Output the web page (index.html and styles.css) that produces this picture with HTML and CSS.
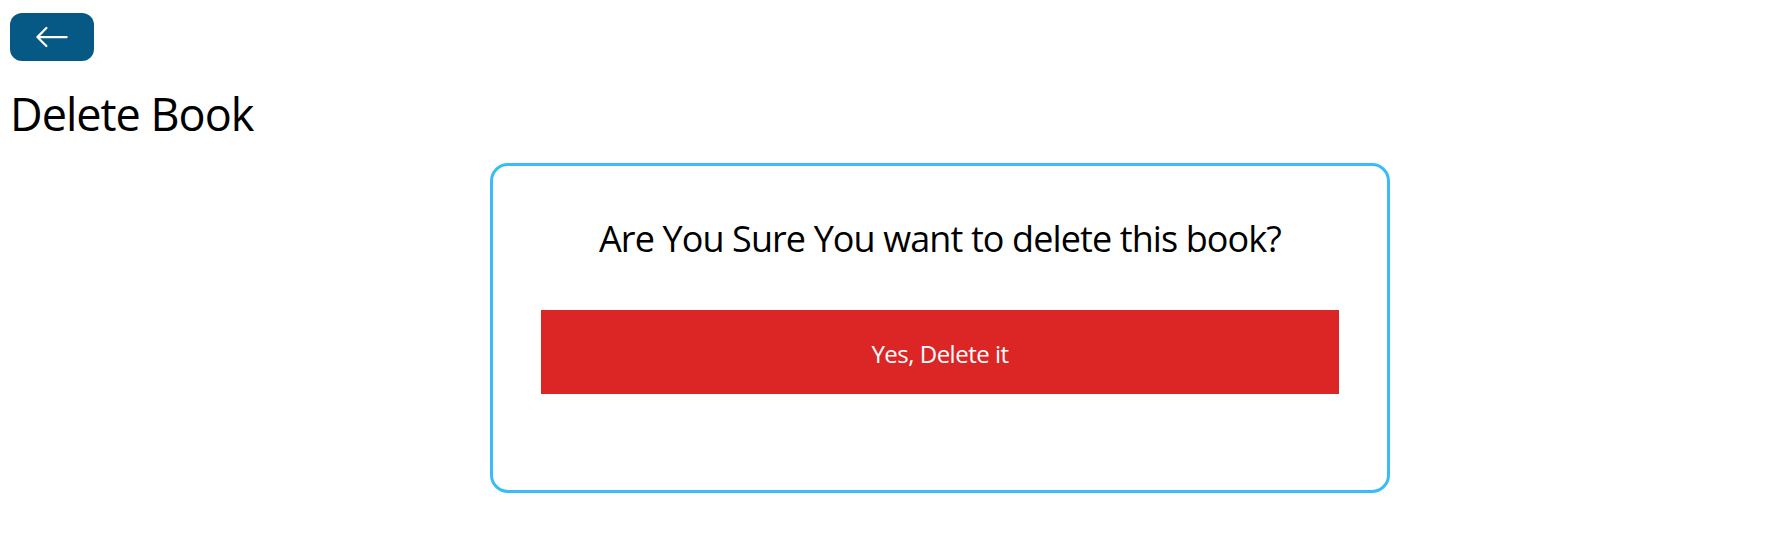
FILE: index.html
```html
<!DOCTYPE html>
<html lang="en">
<head>
<meta charset="utf-8">
<title>Delete Book</title>
<link rel="stylesheet" href="styles.css">
</head>
<body>
<div class="page">
  <a class="back-btn" href="#" aria-label="Back">
    <svg class="back-icon" viewBox="0 0 16 16" width="36" height="36" fill="currentColor"><path fill-rule="evenodd" d="M15 8a.5.5 0 0 0-.5-.5H2.707l3.147-3.146a.5.5 0 1 0-.708-.708l-4 4a.5.5 0 0 0 0 .708l4 4a.5.5 0 0 0 .708-.708L2.707 8.5H14.5A.5.5 0 0 0 15 8z"/></svg>
  </a>
  <h1 class="title">Delete Book</h1>
  <div class="card">
    <h3 class="question">Are You Sure You want to delete this book?</h3>
    <button class="delete-btn" type="button">Yes, Delete it</button>
  </div>
</div>
</body>
</html>
```
FILE: styles.css
```css
html, body {
  margin: 0;
  padding: 0;
  background: #ffffff;
}
body {
  font-family: "Open Sans", "Noto Sans", "Liberation Sans", sans-serif;
  color: #000000;
}
.page {
  padding: 13px 10px;
}
.back-btn {
  display: inline-flex;
  align-items: center;
  justify-content: center;
  background: #075985;
  color: #ffffff;
  padding: 6px 24px;
  border-radius: 12px;
  vertical-align: top;
}
.back-icon {
  display: block;
  width: 36px;
  height: 36px;
}
.title {
  margin: 26px 0 22px;
  font-size: 45px;
  line-height: 54px;
  font-weight: 400;
  letter-spacing: -1px;
}
.card {
  box-sizing: border-box;
  width: 900px;
  margin-left: 480px;
  border: 3px solid #38bdf8;
  border-radius: 18px;
  padding: 49px 48px 48px;
  display: flex;
  flex-direction: column;
  gap: 47px;
}
.question {
  margin: 0;
  font-size: 36px;
  line-height: 48px;
  font-weight: 400;
  text-align: center;
  letter-spacing: -0.9px;
}
.delete-btn {
  display: block;
  width: 100%;
  border: none;
  background: #dc2626;
  color: #ffffff;
  font-family: inherit;
  font-size: 24px;
  line-height: 36px;
  padding: 26px 24px 22px;
  margin: 0 0 48px;
  letter-spacing: -0.5px;
}
```
